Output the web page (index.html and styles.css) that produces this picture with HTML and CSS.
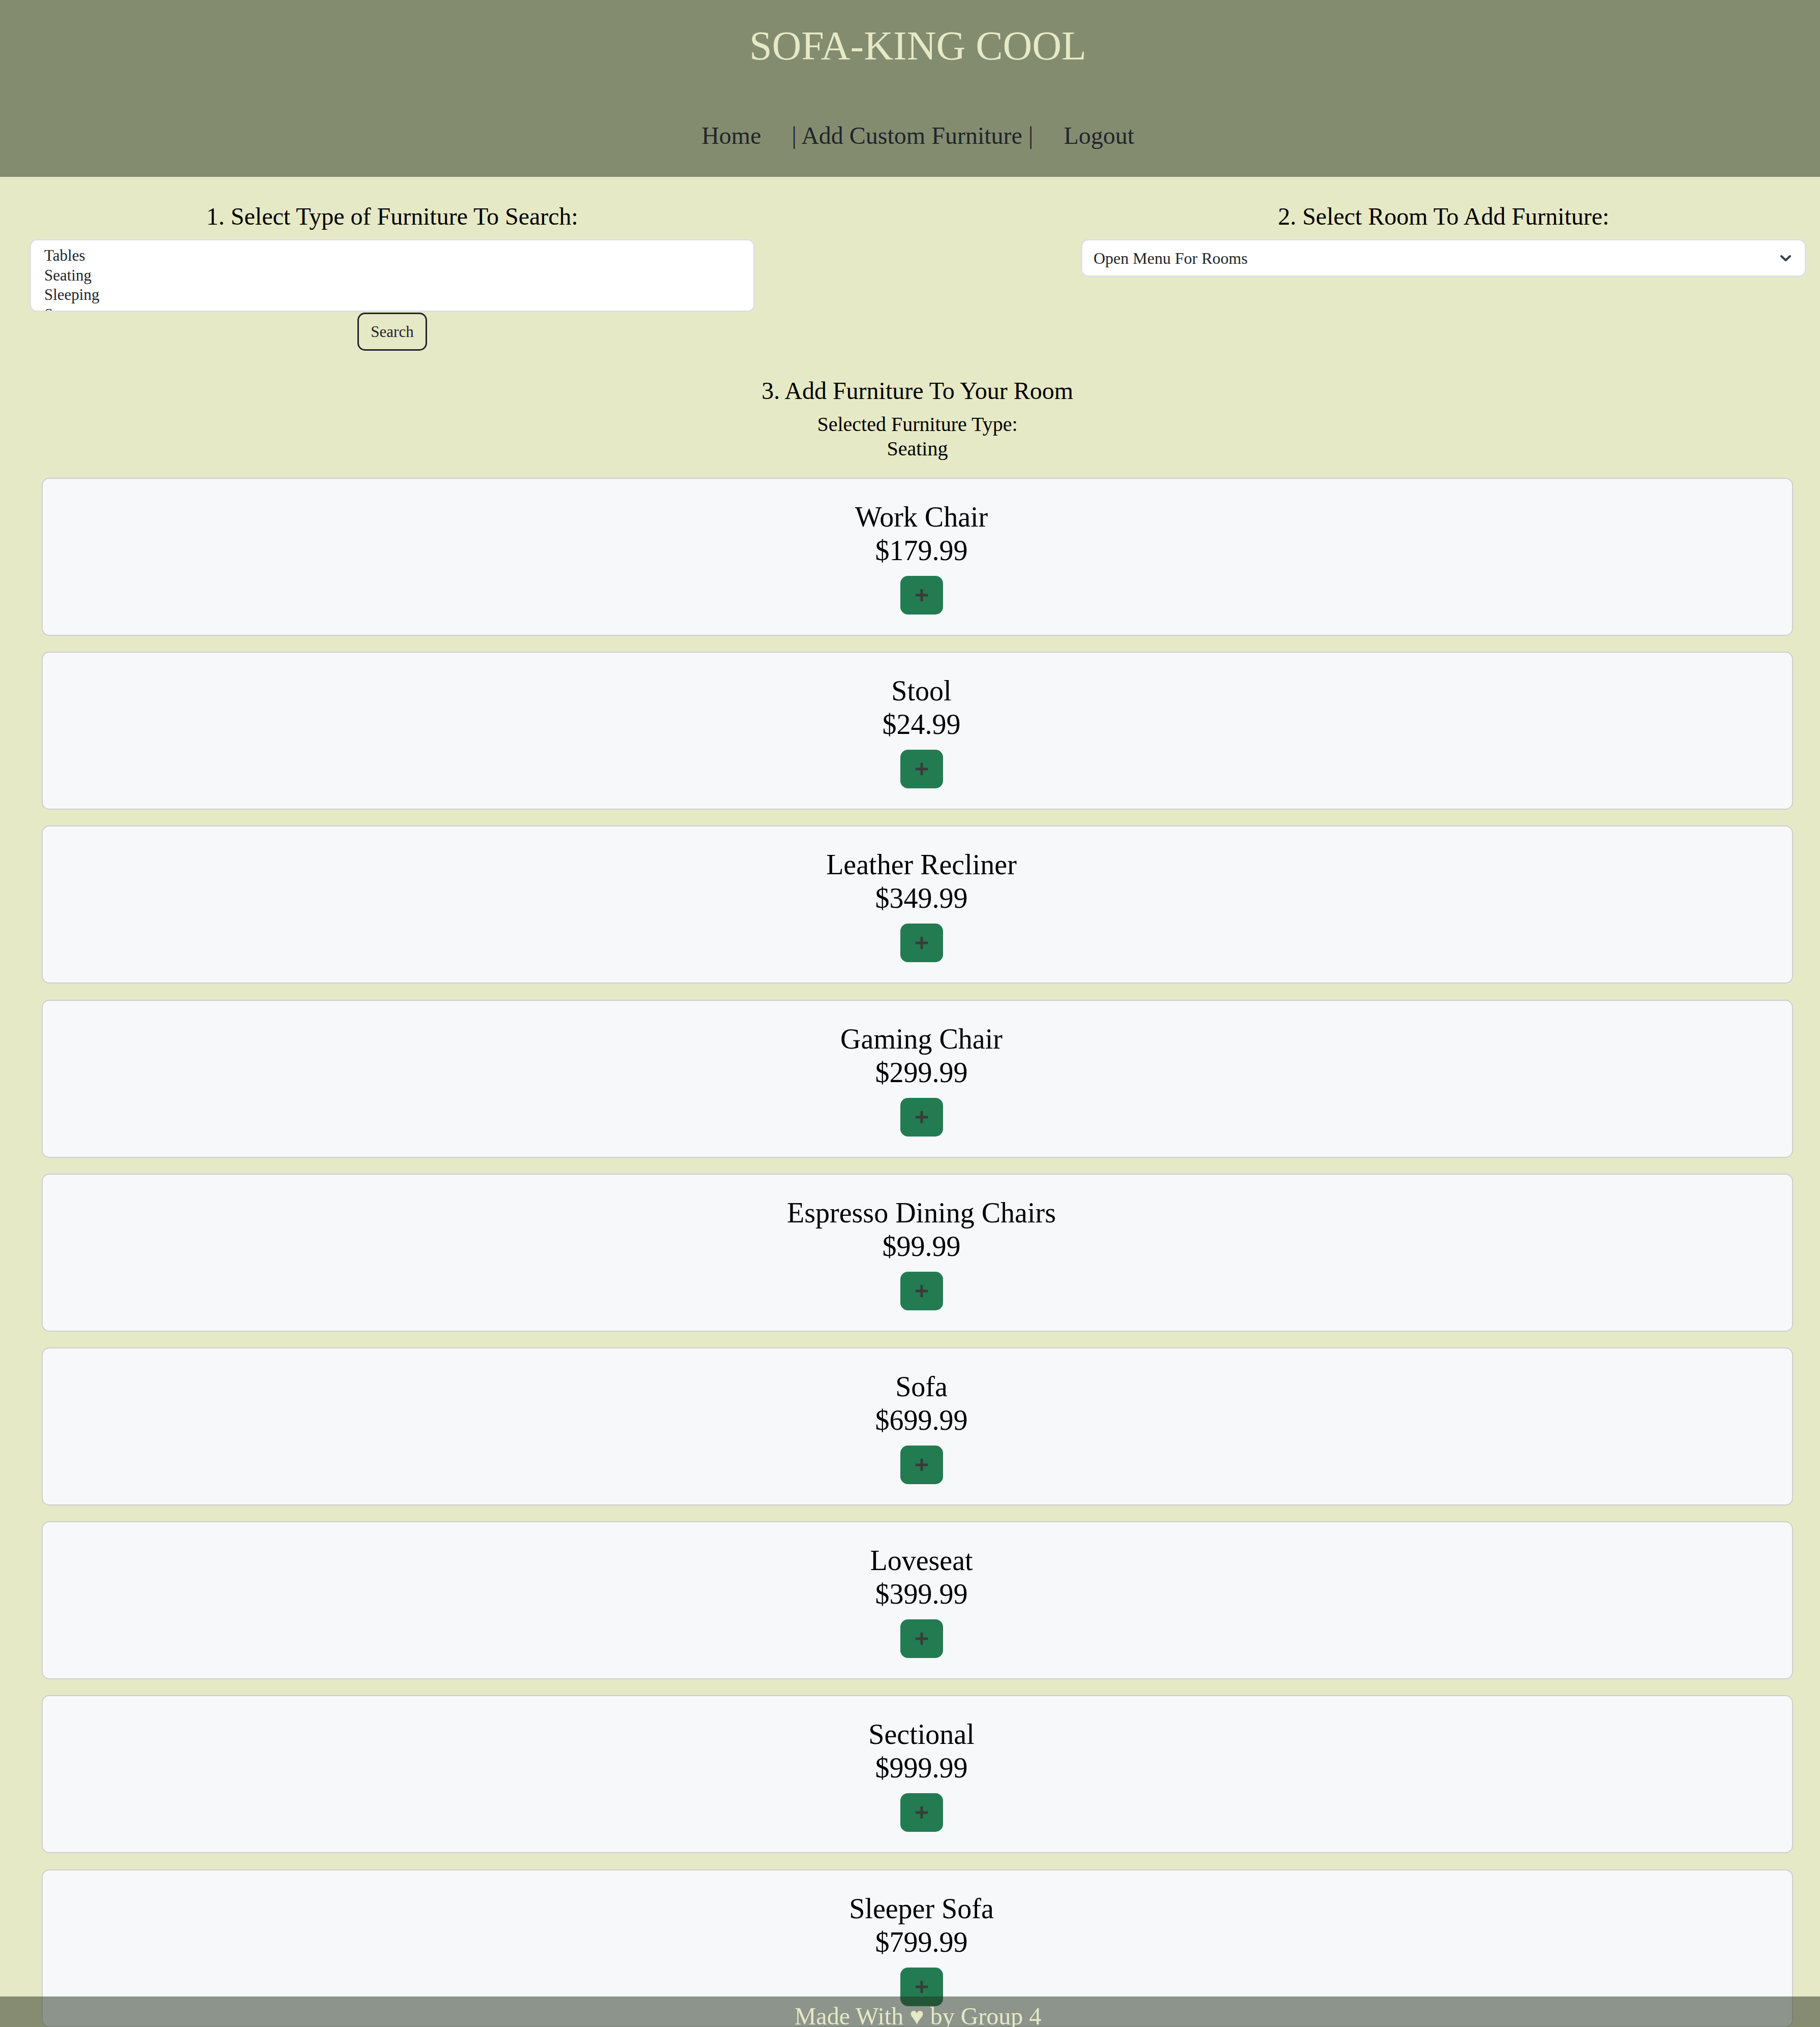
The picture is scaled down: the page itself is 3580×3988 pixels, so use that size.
FILE: index.html
```html
<!DOCTYPE html>
<html lang="en">
<head>
<meta charset="utf-8">
<title>Sofa-King Cool</title>
<link rel="stylesheet" href="styles.css">
</head>
<body>
<header class="site-header">
  <h1 class="site-title">SOFA-KING COOL</h1>
  <nav class="site-nav">
    <a href="#">Home</a>
    <a href="#">| Add Custom Furniture |</a>
    <a href="#">Logout</a>
  </nav>
</header>

<section class="pickers">
  <div class="picker">
    <h2 class="picker-title">1. Select Type of Furniture To Search:</h2>
    <div class="listbox" role="listbox">
      <div class="option">Tables</div>
      <div class="option">Seating</div>
      <div class="option">Sleeping</div>
      <div class="option">Storage</div>
    </div>
    <button class="search-btn" type="button">Search</button>
  </div>
  <div class="picker">
    <h2 class="picker-title">2. Select Room To Add Furniture:</h2>
    <div class="select-box">
      <span>Open Menu For Rooms</span>
      <svg class="chevron" width="21" height="12" viewBox="0 0 21 12"><path d="M2 2 L10.5 10 L19 2" fill="none" stroke="#343a40" stroke-width="4" stroke-linecap="round" stroke-linejoin="round"/></svg>
    </div>
  </div>
</section>

<main class="room">
  <h2 class="room-title">3. Add Furniture To Your Room</h2>
  <div class="selected">Selected Furniture Type:</div>
  <div class="selected">Seating</div>

  <div class="card-list">
    <div class="card"><h3 class="card-name">Work Chair</h3><div class="card-price">$179.99</div><button class="add-btn" type="button"><svg width="24" height="24" viewBox="0 0 24 24"><rect x="9.5" y="0" width="5" height="24" fill="#393b3a"/><rect x="0" y="9.5" width="24" height="5" fill="#393b3a"/></svg></button></div>
    <div class="card"><h3 class="card-name">Stool</h3><div class="card-price">$24.99</div><button class="add-btn" type="button"><svg width="24" height="24" viewBox="0 0 24 24"><rect x="9.5" y="0" width="5" height="24" fill="#393b3a"/><rect x="0" y="9.5" width="24" height="5" fill="#393b3a"/></svg></button></div>
    <div class="card"><h3 class="card-name">Leather Recliner</h3><div class="card-price">$349.99</div><button class="add-btn" type="button"><svg width="24" height="24" viewBox="0 0 24 24"><rect x="9.5" y="0" width="5" height="24" fill="#393b3a"/><rect x="0" y="9.5" width="24" height="5" fill="#393b3a"/></svg></button></div>
    <div class="card"><h3 class="card-name">Gaming Chair</h3><div class="card-price">$299.99</div><button class="add-btn" type="button"><svg width="24" height="24" viewBox="0 0 24 24"><rect x="9.5" y="0" width="5" height="24" fill="#393b3a"/><rect x="0" y="9.5" width="24" height="5" fill="#393b3a"/></svg></button></div>
    <div class="card"><h3 class="card-name">Espresso Dining Chairs</h3><div class="card-price">$99.99</div><button class="add-btn" type="button"><svg width="24" height="24" viewBox="0 0 24 24"><rect x="9.5" y="0" width="5" height="24" fill="#393b3a"/><rect x="0" y="9.5" width="24" height="5" fill="#393b3a"/></svg></button></div>
    <div class="card"><h3 class="card-name">Sofa</h3><div class="card-price">$699.99</div><button class="add-btn" type="button"><svg width="24" height="24" viewBox="0 0 24 24"><rect x="9.5" y="0" width="5" height="24" fill="#393b3a"/><rect x="0" y="9.5" width="24" height="5" fill="#393b3a"/></svg></button></div>
    <div class="card"><h3 class="card-name">Loveseat</h3><div class="card-price">$399.99</div><button class="add-btn" type="button"><svg width="24" height="24" viewBox="0 0 24 24"><rect x="9.5" y="0" width="5" height="24" fill="#393b3a"/><rect x="0" y="9.5" width="24" height="5" fill="#393b3a"/></svg></button></div>
    <div class="card"><h3 class="card-name">Sectional</h3><div class="card-price">$999.99</div><button class="add-btn" type="button"><svg width="24" height="24" viewBox="0 0 24 24"><rect x="9.5" y="0" width="5" height="24" fill="#393b3a"/><rect x="0" y="9.5" width="24" height="5" fill="#393b3a"/></svg></button></div>
    <div class="card"><h3 class="card-name">Sleeper Sofa</h3><div class="card-price">$799.99</div><button class="add-btn" type="button"><svg width="24" height="24" viewBox="0 0 24 24"><rect x="9.5" y="0" width="5" height="24" fill="#393b3a"/><rect x="0" y="9.5" width="24" height="5" fill="#393b3a"/></svg></button></div>
  </div>
</main>

<footer class="site-footer">Made With &#9829; by Group 4</footer>
</body>
</html>
```
FILE: styles.css
```css
* { box-sizing: border-box; }
html { scrollbar-width: none; }
html::-webkit-scrollbar { display: none; }
body {
  margin: 0;
  background: #e6e9c6;
  font-family: "Liberation Serif", "Times New Roman", serif;
  color: #000;
}

.site-header {
  height: 348px;
  background: #848c70;
  padding: 42px 0 0 31px;
  text-align: center;
}
.site-title {
  margin: 0;
  font-size: 80px;
  font-weight: 400;
  line-height: 96px;
  color: #e6e9c6;
}
.site-nav {
  margin-top: 100px;
  display: flex;
  justify-content: center;
  gap: 60px;
  font-size: 48px;
  line-height: 57.6px;
}
.site-nav a { color: #212529; text-decoration: none; }

.pickers {
  display: flex;
  justify-content: space-between;
  padding: 50px 27px 0 58px;
}
.picker {
  width: 1427px;
  display: flex;
  flex-direction: column;
  align-items: center;
}
.picker-title {
  margin: 0 0 15.6px;
  font-size: 48px;
  font-weight: 400;
  line-height: 56.4px;
  text-align: center;
}
.listbox {
  width: 100%;
  height: 144px;
  background: #fff;
  border: 3px solid #dde0e3;
  border-radius: 15px;
  padding: 11px 29px 0 26px;
  overflow: hidden;
  font-size: 31px;
  line-height: 38.5px;
  color: #212529;
}
.search-btn {
  margin-top: 1px;
  width: 137px;
  height: 75px;
  padding: 0;
  border: 3px solid #212529;
  border-radius: 15px;
  background: transparent;
  font-family: inherit;
  font-size: 31px;
  line-height: 46px;
  color: #212529;
}
.select-box {
  width: 100%;
  height: 75px;
  background: #fff;
  border: 3px solid #dde0e3;
  border-radius: 15px;
  padding: 0 27px 0 22px;
  display: flex;
  align-items: center;
  justify-content: space-between;
  font-size: 32px;
  line-height: 48px;
  color: #212529;
}
.chevron { display: block; }

.room {
  padding: 51px 53px 0 82px;
  text-align: center;
}
.room-title {
  margin: 0 0 14px;
  font-size: 48px;
  font-weight: 400;
  line-height: 56.4px;
}
.selected {
  font-size: 40px;
  line-height: 48px;
}
.card-list {
  margin-top: 32.6px;
  display: flex;
  flex-direction: column;
  gap: 31.2px;
  padding-bottom: 120px;
}
.card {
  background: #f7f8fa;
  border: 2px solid #cdcecf;
  border-radius: 15px;
  padding: 42px 40px 40px 56px;
  display: flex;
  flex-direction: column;
  align-items: center;
}
.card-name {
  margin: 0;
  font-size: 56px;
  font-weight: 400;
  line-height: 66px;
}
.card-price {
  font-size: 56px;
  line-height: 66px;
}
.add-btn {
  margin-top: 17px;
  width: 84px;
  height: 76px;
  padding: 0;
  border: none;
  border-radius: 15px;
  background: #237b51;
  display: grid;
  place-items: center;
}
.add-btn svg { display: block; }

.site-footer {
  position: fixed;
  left: 0;
  right: 0;
  bottom: 0;
  height: 60px;
  padding-left: 31px;
  background: rgba(36, 48, 28, 0.5);
  color: #e6e9c6;
  font-size: 48px;
  line-height: 78px;
  text-align: center;
  white-space: nowrap;
}
```
